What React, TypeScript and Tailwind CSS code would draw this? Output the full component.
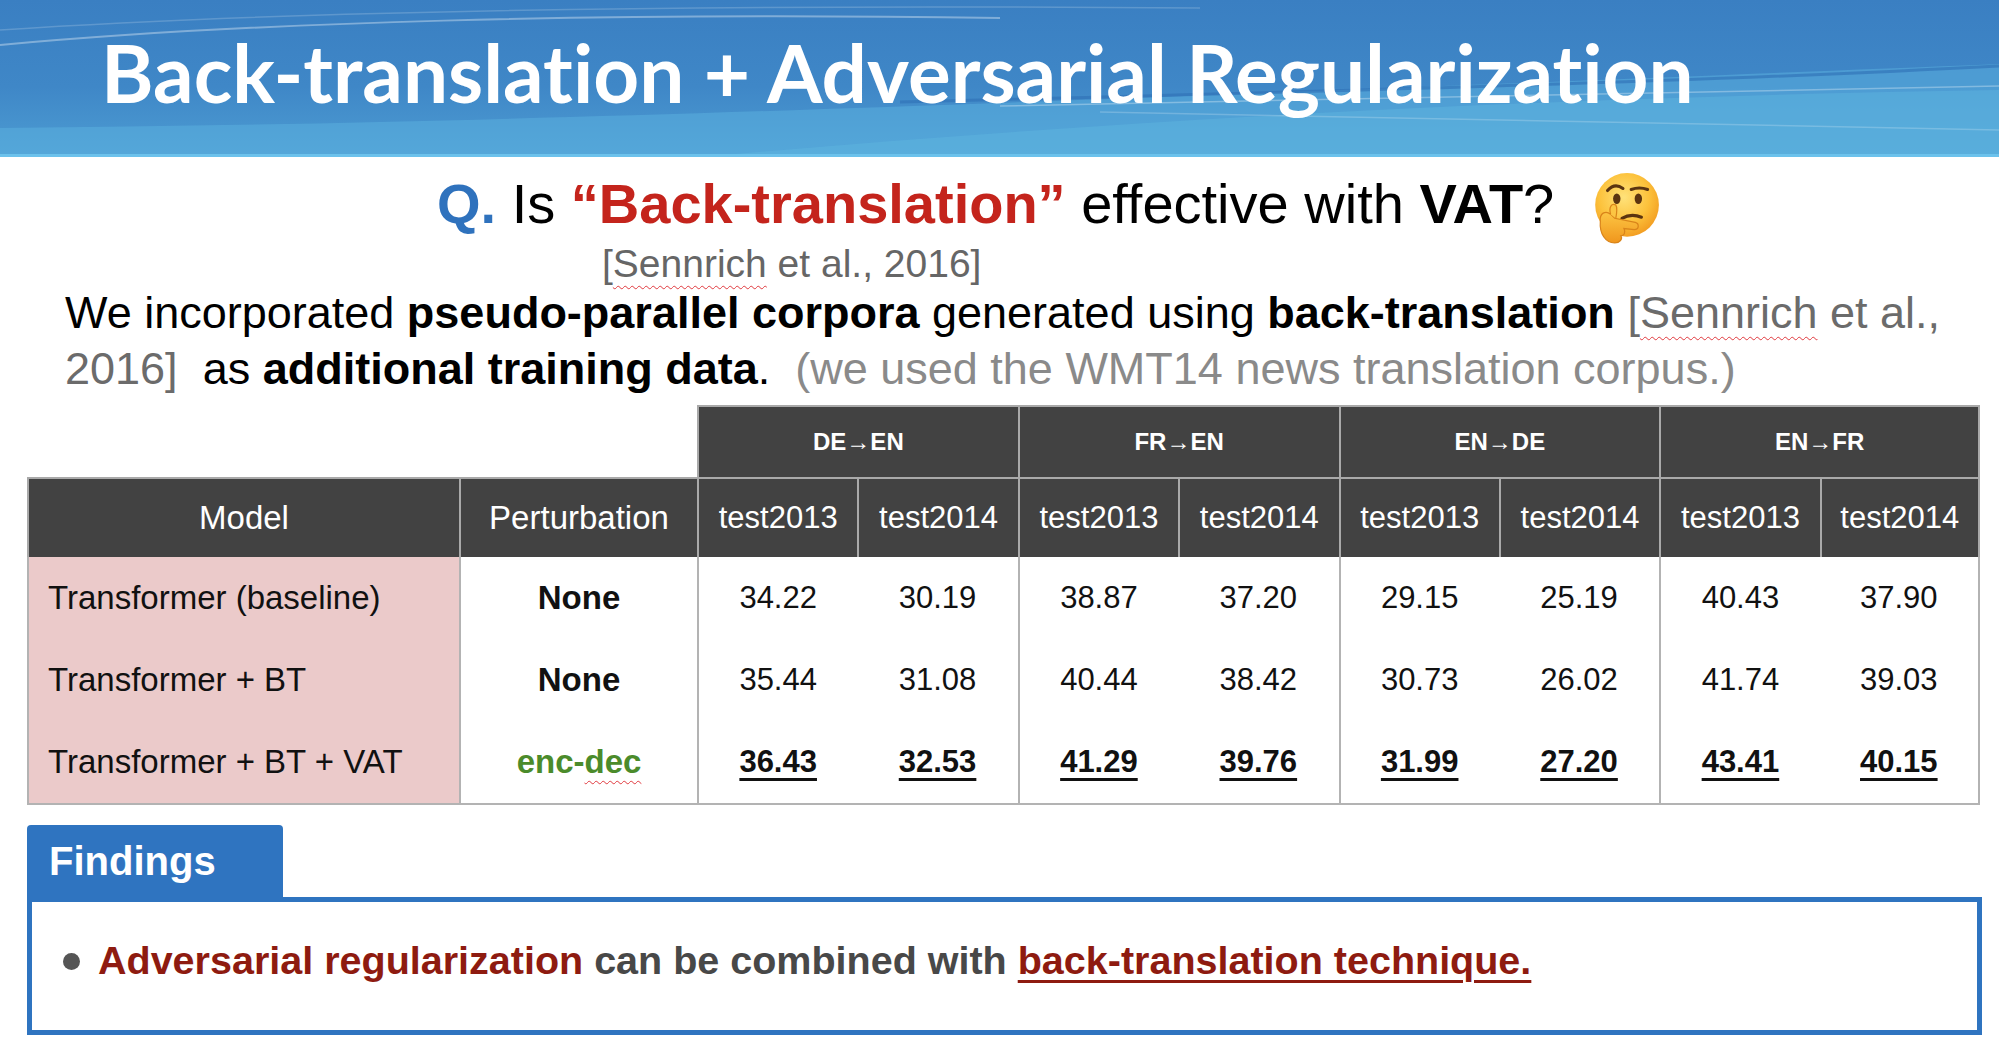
import React from 'react';

const groups = ['DE→EN', 'FR→EN', 'EN→DE', 'EN→FR'];

const rows = [
  {
    model: 'Transformer (baseline)',
    pert: 'None',
    vals: ['34.22', '30.19', '38.87', '37.20', '29.15', '25.19', '40.43', '37.90'],
  },
  {
    model: 'Transformer + BT',
    pert: 'None',
    vals: ['35.44', '31.08', '40.44', '38.42', '30.73', '26.02', '41.74', '39.03'],
  },
  {
    model: 'Transformer + BT + VAT',
    pert: 'enc-dec',
    vals: ['36.43', '32.53', '41.29', '39.76', '31.99', '27.20', '43.41', '40.15'],
    best: true,
  },
];

function ThinkingFace() {
  return (
    <svg width="74" height="74" viewBox="0 0 72 72" className="mt-[7px] ml-[34px] shrink-0">
      <defs>
        <radialGradient id="face" cx="45%" cy="38%" r="65%">
          <stop offset="0%" stopColor="#ffe27a" />
          <stop offset="60%" stopColor="#fcc23c" />
          <stop offset="100%" stopColor="#f29a1f" />
        </radialGradient>
        <linearGradient id="hand" x1="0" y1="0" x2="0" y2="1">
          <stop offset="0%" stopColor="#fcc543" />
          <stop offset="100%" stopColor="#f0961d" />
        </linearGradient>
      </defs>
      <circle cx="38" cy="33" r="31" fill="url(#face)" />
      <path d="M19 19 Q26 11 34 17" stroke="#5b3410" strokeWidth="3" fill="none" strokeLinecap="round" />
      <path d="M42 18 Q50 15 58 18" stroke="#5b3410" strokeWidth="3" fill="none" strokeLinecap="round" />
      <ellipse cx="28" cy="27" rx="3.6" ry="5" fill="#5b3410" />
      <ellipse cx="49" cy="27" rx="3.6" ry="5" fill="#5b3410" />
      <path d="M33 46 Q42 41 52 45" stroke="#5b3410" strokeWidth="3" fill="none" strokeLinecap="round" />
      <path
        d="M12 49 C11 41 17 38 22 42 L26 46 L46 50 C50 51 50 57 45 57 L35 56 C37 60 35 63 32 63 C34 66 31 70 26 70 C17 70 11 61 12 49 Z"
        fill="url(#hand)"
        stroke="#d9841a"
        strokeWidth="1.2"
      />
      <path d="M22 42 C20 35 23 31 27 33 C29 36 28 41 27 46" fill="#fcc543" stroke="#d9841a" strokeWidth="1.2" />
    </svg>
  );
}

function Header() {
  return (
    <div className="relative h-[157px] overflow-hidden bg-[linear-gradient(180deg,#3a7fc2_0%,#3f87c7_55%,#4d9dd3_100%)]">
      <svg className="absolute inset-0" width="1999" height="157" viewBox="0 0 1999 157" preserveAspectRatio="none">
        <path d="M0 157 L0 128 C 500 124, 1000 104, 1999 64 L1999 157 Z" fill="#5cb2e0" opacity="0.5" />
        <path d="M700 157 C 1100 122, 1500 98, 1999 90 L1999 157 Z" fill="#62b8e2" opacity="0.4" />
        <path d="M0 45 C 250 22, 600 12, 1000 18" stroke="#ffffff" strokeOpacity="0.35" strokeWidth="2" fill="none" />
        <path d="M0 30 C 300 10, 700 4, 1200 8" stroke="#ffffff" strokeOpacity="0.18" strokeWidth="1.5" fill="none" />
        <path d="M900 102 C 1300 92, 1700 82, 1999 66" stroke="#2f6fb5" strokeOpacity="0.6" strokeWidth="3" fill="none" />
        <path d="M1000 106 C 1400 98, 1750 92, 1999 86" stroke="#ffffff" strokeOpacity="0.3" strokeWidth="1.5" fill="none" />
        <path d="M1100 112 C 1500 118, 1800 125, 1999 130" stroke="#ffffff" strokeOpacity="0.2" strokeWidth="1.5" fill="none" />
      </svg>
      <div className="absolute left-0 right-0 bottom-0 h-[3px] bg-[#6cc2ec]" />
      <h1 className="relative pl-[101px] pt-[32px] font-['Lato',sans-serif] font-bold text-white text-[80px] leading-[80px] whitespace-nowrap [font-variant-ligatures:none]">
        Back-translation + Adversarial Regularization
      </h1>
    </div>
  );
}

function ResultsTable() {
  return (
    <div className="ml-[27px] w-[1953px] grid grid-cols-[432px_238px_repeat(8,minmax(0,1fr))] text-[#111]">
      <div className="col-span-2" />
      {groups.map((g, i) => (
        <div
          key={g}
          className={
            'col-span-2 h-[72px] bg-[#424242] border-t-2 border-l-2 border-[#a9a9a9] flex items-center justify-center text-white font-bold text-[24px]' +
            (i === groups.length - 1 ? ' border-r-2' : '')
          }
        >
          {g}
        </div>
      ))}

      <div className="h-[80px] bg-[#424242] border-t-2 border-l-2 border-[#a9a9a9] flex items-center justify-center text-white text-[33px]">
        Model
      </div>
      <div className="h-[80px] bg-[#424242] border-t-2 border-l-2 border-[#a9a9a9] flex items-center justify-center text-white text-[33px]">
        Perturbation
      </div>
      {Array.from({ length: 8 }).map((_, i) => (
        <div
          key={i}
          className={
            'h-[80px] bg-[#424242] border-t-2 border-l-2 border-[#a9a9a9] flex items-center justify-center text-white text-[31px]' +
            (i === 7 ? ' border-r-2' : '')
          }
        >
          {i % 2 === 0 ? 'test2013' : 'test2014'}
        </div>
      ))}

      {rows.map((r, ri) => {
        const last = ri === rows.length - 1;
        const h = last ? ' h-[84px] border-b-2' : ' h-[82px]';
        return (
          <React.Fragment key={r.model}>
            <div className={'bg-[#ebcaca] border-l-2 border-[#b3b3b3] pl-[19px] flex items-center text-[33px]' + h}>
              {r.model}
            </div>
            <div className={'border-l-2 border-[#b3b3b3] flex items-center justify-center font-bold text-[33px]' + h}>
              {r.best ? (
                <span className="text-[#4b8b2b]">
                  enc-
                  <span className="underline decoration-wavy decoration-[#e0393e] decoration-1 underline-offset-[7px]">dec</span>
                </span>
              ) : (
                r.pert
              )}
            </div>
            {r.vals.map((v, vi) => (
              <div
                key={vi}
                className={
                  'border-[#b3b3b3] flex items-center justify-center text-[31px]' +
                  h +
                  (vi % 2 === 0 ? ' border-l-2' : '') +
                  (vi === 7 ? ' border-r-2' : '')
                }
              >
                {r.best ? (
                  <span className="font-bold underline decoration-[length:3px] underline-offset-[6px]">{v}</span>
                ) : (
                  v
                )}
              </div>
            ))}
          </React.Fragment>
        );
      })}
    </div>
  );
}

function Findings() {
  return (
    <div className="ml-[27px] mt-[20px] w-[1955px]">
      <div className="w-[256px] h-[72px] bg-[#2f74c0] rounded-t-[4px] pl-[22px] text-white font-bold text-[40px] leading-[72px]">
        Findings
      </div>
      <div className="h-[138px] border-[5px] border-[#2f74c0]">
        <div className="h-[116px] flex items-center pl-[31px]">
          <span className="w-[17px] h-[17px] rounded-full bg-[#555] mt-[2px] mr-[18px] shrink-0" />
          <span className="font-bold text-[39.5px] leading-[46px] whitespace-nowrap">
            <span className="text-[#8e1b10]">Adversarial regularization</span>
            <span className="text-[#484848]"> can be combined with </span>
            <span className="text-[#8e1b10] underline decoration-[length:3px] underline-offset-[6px]">
              back-translation technique.
            </span>
          </span>
        </div>
      </div>
    </div>
  );
}

export default function App() {
  return (
    <div className="w-[1999px] h-[1055px] bg-white overflow-hidden font-['Liberation_Sans',Arial,sans-serif]">
      <Header />
      <div className="mt-[15px] h-[64px] flex items-center pl-[437px] text-[56px] leading-[64px] whitespace-nowrap">
        <span>
          <span className="font-bold text-[#2f72bd]">Q.</span>
          <span className="text-black"> Is </span>
          <span className="font-bold text-[#c4241c]">“Back-translation”</span>
          <span className="text-black"> effective with </span>
          <span className="font-bold text-black">VAT</span>
          <span className="text-black">?</span>
        </span>
        <ThinkingFace />
      </div>
      <div className="pl-[602px] text-[39px] leading-[55px] text-[#666] whitespace-nowrap">
        [<span className="underline decoration-wavy decoration-[#e0393e] decoration-1 underline-offset-[8px]">Sennrich</span> et al., 2016]
      </div>
      <div className="mt-[-6px] pl-[65px] text-[45px] leading-[56px] text-black whitespace-nowrap">
        We incorporated <span className="font-bold">pseudo-parallel corpora</span> generated using{' '}
        <span className="font-bold">back-translation</span>{' '}
        <span className="text-[#6b6b6b]">
          [<span className="underline decoration-wavy decoration-[#e0393e] decoration-1 underline-offset-[8px]">Sennrich</span> et al.,
        </span>
        <br />
        <span className="text-[#6b6b6b]">2016]</span>&nbsp; as <span className="font-bold">additional training data</span>.&nbsp;{' '}
        <span className="text-[#8a8a8a]">(we used the WMT14 news translation corpus.)</span>
      </div>
      <div className="mt-[8px]">
        <ResultsTable />
      </div>
      <Findings />
    </div>
  );
}
